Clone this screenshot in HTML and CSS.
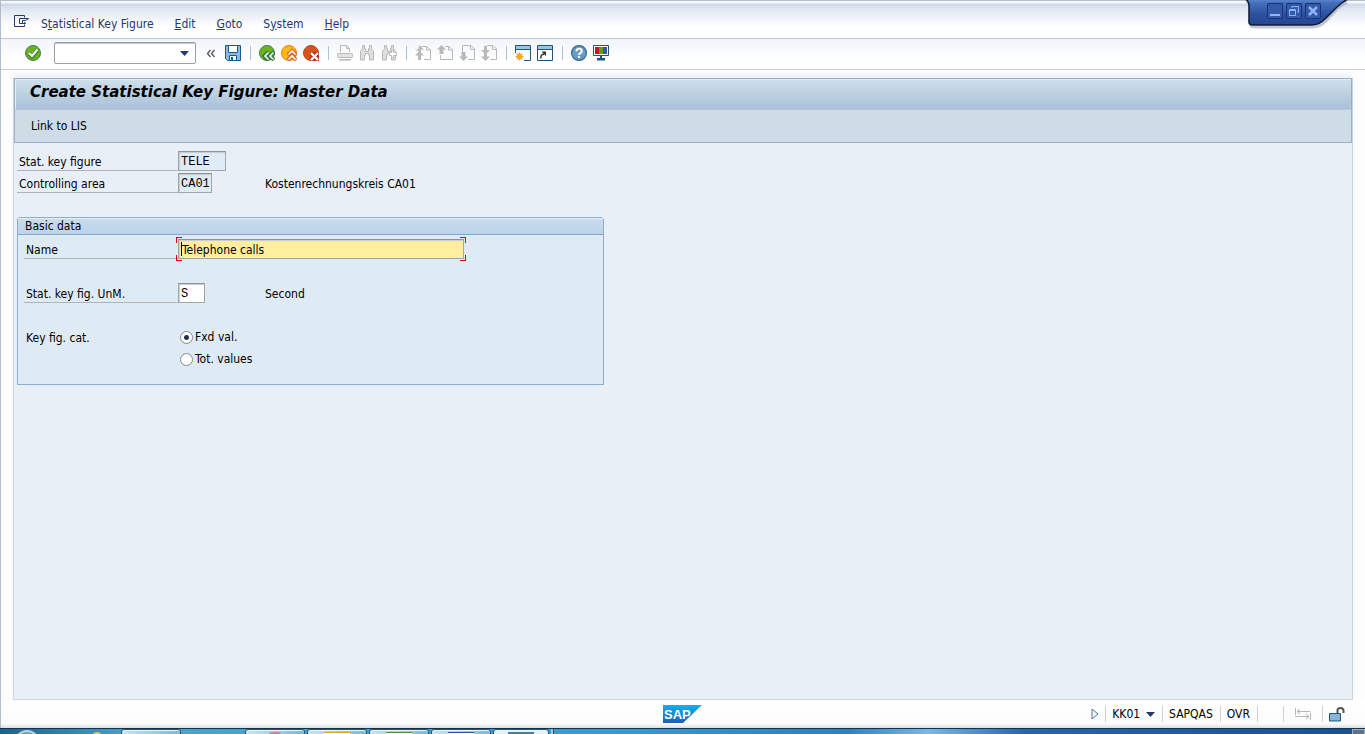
FILE: index.html
```html
<!DOCTYPE html>
<html lang="en">
<head>
<meta charset="utf-8">
<title>Create Statistical Key Figure: Master Data</title>
<link rel="stylesheet" href="styles.css">
</head>
<body>
<div class="window">
  <nav class="menubar">
    <button class="menu-icon" aria-label="System menu">
      <svg width="16" height="14" viewBox="0 0 16 14" fill="none" stroke="#24386b"><path d="M10.500 2.500V.5H.5v11h10v-2M5.500 3.500h9M5.500 3.500v5h3M8.500 5.500h3l3-2M8.500 5.500v3h3l-1-1.500"/></svg>
    </button>
    <a href="#">S<u>t</u>atistical Key Figure</a>
    <a href="#"><u>E</u>dit</a>
    <a href="#"><u>G</u>oto</a>
    <a href="#">S<u>y</u>stem</a>
    <a href="#"><u>H</u>elp</a>
  </nav>

  <div class="window-controls">
    <svg class="window-tab" width="106" height="30" viewBox="0 0 106 30" aria-hidden="true">
      <defs><linearGradient id="tab" x1="0" y1="0" x2="0" y2="1"><stop offset="0" stop-color="#5d8ad2"/><stop offset=".15" stop-color="#456fbb"/><stop offset=".6" stop-color="#2c4f9f"/><stop offset="1" stop-color="#254591"/></linearGradient></defs>
      <path d="M3 1Q6 3 6 8v15q0 4 4 4h59q7 0 13-6L93 9q5-5 10-7" fill="none" stroke="#8c93a3" stroke-width="3" opacity=".5"/>
      <path d="M1-1q4 2 4 7v16q0 3 4 3h59q7 0 13-6L92 8q6-6 12-9z" fill="url(#tab)"/>
      <path d="M1-1q4 2 4 7v16q0 3 4 3h59q7 0 13-6L92 8q6-6 12-9" fill="none" stroke="#0d1838" stroke-width="1.500"/>
    </svg>
    <div class="window-buttons">
      <button aria-label="Minimize"><svg width="16" height="16" viewBox="0 0 16 16"><path d="M3 11h10v2H3z" fill="#8fb4ff"/></svg></button>
      <button aria-label="Restore"><svg width="16" height="16" viewBox="0 0 16 16" fill="none" stroke="#8fb4ff"><path d="M6 5V3.500h6.500V9H11"/><path d="M3.500 6.500h6v6h-6zM3 7.500h7"/></svg></button>
      <button aria-label="Close"><svg width="16" height="16" viewBox="0 0 16 16"><path d="M4 4l8 8M12 4l-8 8" stroke="#8fb4ff" stroke-width="2.500"/></svg></button>
    </div>
  </div>

  <div class="toolbar">
    <button class="tool enter" aria-label="Enter"><svg width="16" height="16" viewBox="0 0 16 16"><circle cx="8" cy="8" r="7.500" fill="#6cb31c" stroke="#3f7f4f"/><path d="M4 8.500l3 3L12.500 5" fill="none" stroke="#3f7f3a" stroke-width="4"/><path d="M4 8l3 3 5.500-6.500" fill="none" stroke="#fff" stroke-width="2"/></svg></button>
    <div class="command">
      <input type="text" aria-label="Command">
      <button aria-label="Command history"><svg width="9" height="5" viewBox="0 0 9 5"><path d="M0 0h9L4.500 5z" fill="#24386b"/></svg></button>
    </div>
    <button class="tool" aria-label="Hide command field"><svg width="16" height="16" viewBox="0 0 16 16" fill="none" stroke="#555"><path d="M7.500 5L4.500 8.500l3 3.500M11.500 5L8.500 8.500l3 3.500" stroke-width="1.300"/></svg></button>
    <button class="tool" aria-label="Save"><svg width="16" height="16" viewBox="0 0 16 16"><path d="M.5.5h15v15H2.500l-2-2z" fill="#8ebbdc" stroke="#155b8e"/><path d="M3.500.5h9v7h-9z" fill="#fff" stroke="#155b8e"/><path d="M4.500 15.500v-5h7v5z" fill="#fff" stroke="#155b8e"/><path d="M6 12h2v4H6z" fill="#155b8e"/></svg></button>
    <span class="sep"></span>
    <button class="tool" aria-label="Back"><svg width="16" height="16" viewBox="0 0 16 16"><circle cx="8" cy="8" r="7.500" fill="#6cb31c" stroke="#3f7f4f"/><path d="M9.500 7L5.500 11l4 4M15 7l-4 4 4 4" fill="none" stroke="#307a3a" stroke-width="4"/><path d="M9.500 7.500L6 11l3.500 3.500M14.500 7.500L11 11l3.500 3.500" fill="none" stroke="#fff" stroke-width="1.600"/></svg></button>
    <button class="tool" aria-label="Exit"><svg width="16" height="16" viewBox="0 0 16 16"><circle cx="8" cy="8" r="7.500" fill="#fcb913" stroke="#e67817"/><path d="M7 10l4-4 4 4M7 15l4-4 4 4" fill="none" stroke="#e0641c" stroke-width="4"/><path d="M7.500 9.500L11 6l3.500 3.500M7.500 14.500L11 11l3.500 3.500" fill="none" stroke="#fff" stroke-width="1.600"/></svg></button>
    <button class="tool" aria-label="Cancel"><svg width="16" height="16" viewBox="0 0 16 16"><circle cx="8" cy="8" r="7.500" fill="#d95316" stroke="#b8441c"/><path d="M7 7h9v9H7z" fill="#b83a1c"/><path d="M8 8l7 7M15 8l-7 7" stroke="#fff" stroke-width="2.200"/></svg></button>
    <span class="sep"></span>
    <button class="tool" disabled aria-label="Print"><svg width="16" height="16" viewBox="0 0 16 16" fill="none" stroke="#b9b9b9"><path d="M3.500 7V.5h6l3 3V7M9.500.5v3h3"/><rect x=".5" y="8.500" width="15" height="4" rx="1" fill="#e2e2e2"/><path d="M2 14.800h12" stroke-width="1.500"/></svg></button>
    <button class="tool" disabled aria-label="Find"><svg width="16" height="16" viewBox="0 0 16 16" fill="#dedede" stroke="#b9b9b9"><path d="M3.500.5h2v3h1v3h3v-3h1v-3h2v3l2 3v8.500h-4V10h-1V8.500h-3V10h-1v5h-4V6.500l2-3z"/></svg></button>
    <button class="tool" disabled aria-label="Find next"><svg width="16" height="16" viewBox="0 0 16 16" fill="#dedede" stroke="#b9b9b9"><path d="M3.500.5h2v3h1v3h3v-3h1v-3h2v3l2 3v8.500h-4V10h-1V8.500h-3V10h-1v5h-4V6.500l2-3z"/><path d="M10.500 5.500h2v2h3v3h-3v2h-2v-2h-2v-3h2z" fill="#fff"/></svg></button>
    <span class="sep"></span>
    <button class="tool" disabled aria-label="First page"><svg width="16" height="16" viewBox="0 0 16 16" fill="none" stroke="#b9b9b9"><path d="M7 1.500h5l3.500 3.500v9.500H9M11.500 1.500V5h4"/><path d="M4.500 0L9 4.500H6V7h3L4.500 7 0 4.500h3zM4.500 6L9 10.500H6V15H3v-4.500H0z" fill="#b9b9b9" stroke="none"/></svg></button>
    <button class="tool" disabled aria-label="Previous page"><svg width="16" height="16" viewBox="0 0 16 16" fill="none" stroke="#b9b9b9"><path d="M8 1.500h4l3.500 3.500v9.500h-12V10M11.500 1.500V5h4"/><path d="M4.500 0L9 4.500H6.500V9h-4V4.500H0z" fill="#b9b9b9" stroke="none"/></svg></button>
    <button class="tool" disabled aria-label="Next page"><svg width="16" height="16" viewBox="0 0 16 16" fill="none" stroke="#b9b9b9"><path d="M3.500 7V.5h8.500L15.500 4v10.500H9M11.500.5v4h4"/><path d="M4.500 16L9 11.500H6.500V7h-4v4.500H0z" fill="#b9b9b9" stroke="none"/></svg></button>
    <button class="tool" disabled aria-label="Last page"><svg width="16" height="16" viewBox="0 0 16 16" fill="none" stroke="#b9b9b9"><path d="M6 .5h6L15.500 4v10.500H9M11.500.5v4h4"/><path d="M4.500 9.500L9 5H6V1H3v4H0zM4.500 16L9 11.500H6V8H3v3.500H0z" fill="#b9b9b9" stroke="none"/></svg></button>
    <span class="sep"></span>
    <button class="tool" aria-label="New session"><svg width="16" height="16" viewBox="0 0 16 16"><path d="M.5.5h15v15H9M.5 8V.5" fill="none" stroke="#1b5580"/><path d="M1 1h14v3H1z" fill="#9cc3df"/><path d="M0 4.500h16" stroke="#1b5580"/><path d="M4.500 7.500v8M.5 11.500h8M1.700 8.700l5.600 5.600M7.300 8.700l-5.600 5.600" stroke="#ef9b14" stroke-width="1.200"/><circle cx="4.500" cy="11.500" r="2.600" fill="#f6a91b"/></svg></button>
    <button class="tool" aria-label="Create shortcut"><svg width="16" height="16" viewBox="0 0 16 16"><path d="M.5.5h15v15H.5z" fill="#fff" stroke="#1b5580"/><path d="M1 1h14v3H1z" fill="#9cc3df"/><path d="M0 4.500h16" stroke="#1b5580"/><path d="M4 13.500q-1-4 3.500-4.500" fill="none" stroke="#333" stroke-width="1.500"/><path d="M4.500 6.500H9V11z" fill="#333"/></svg></button>
    <span class="sep"></span>
    <button class="tool" aria-label="Help"><svg width="16" height="16" viewBox="0 0 16 16"><circle cx="8" cy="8" r="7.400" fill="#6a9cc4" stroke="#2f6793" stroke-width="1.200"/><path d="M5.500 6.300q0-2.700 2.600-2.700 2.700 0 2.700 2.400 0 1.500-1.500 2.200Q8 8.800 8 10" fill="none" stroke="#fff" stroke-width="1.900"/><path d="M7 11h2v2H7z" fill="#fff"/></svg></button>
    <button class="tool" aria-label="Customize layout"><svg width="16" height="16" viewBox="0 0 16 16"><path d="M.5.5h15v10H.5z" fill="#fff" stroke="#1b5580"/><path d="M2 2h4v7H2z" fill="#c8141c"/><path d="M6 2h4v7H6z" fill="#55a51c"/><path d="M10 2h4v7h-4z" fill="#3155b0"/><path d="M7 11h2v2h3v2.500H4V13h3z" fill="#1b5580"/></svg></button>
  </div>

  <main class="screen">
    <header class="titlebar"><h1>Create Statistical Key Figure: Master Data</h1></header>
    <div class="app-toolbar"><button>Link to LIS</button></div>

    <form class="form">
      <div class="row">
        <label for="figure">Stat. key figure</label>
        <input class="field readonly w-figure" id="figure" value="TELE" readonly>
      </div>
      <div class="row">
        <label for="area">Controlling area</label>
        <div class="slot"><input class="field readonly w-area" id="area" value="CA01" readonly></div>
        <span class="text">Kostenrechnungskreis CA01</span>
      </div>

      <section class="group">
        <h2>Basic data</h2>
        <div class="group-body">
          <div class="row">
            <label for="name">Name</label>
            <div class="focus">
              <input class="field name" id="name" value="Telephone calls">
              <i class="caret"></i><i class="corner tl"></i><i class="corner tr"></i><i class="corner bl"></i><i class="corner br"></i>
            </div>
          </div>
          <div class="row spaced">
            <label for="unit">Stat. key fig. UnM.</label>
            <div class="slot"><input class="field w-unit" id="unit" value="S"></div>
            <span class="text">Second</span>
          </div>
          <div class="row spaced">
            <span class="caption">Key fig. cat.</span>
            <label class="radio"><input type="radio" name="category" checked>Fxd val.</label>
          </div>
          <div class="row">
            <span class="caption"></span>
            <label class="radio"><input type="radio" name="category">Tot. values</label>
          </div>
        </div>
      </section>
    </form>
  </main>

  <footer class="statusbar">
    <svg class="logo" width="40" height="18" viewBox="0 0 40 18" role="img" aria-label="SAP">
      <defs><linearGradient id="sap" x1="0" y1="0" x2="0" y2="1"><stop offset="0" stop-color="#0fb3ea"/><stop offset="1" stop-color="#1b5fb6"/></linearGradient></defs>
      <path d="M0 0h39L20 18H0z" fill="url(#sap)"/>
      <text class="logo-text" x="1" y="14">SAP</text>
    </svg>
    <div class="status">
      <button class="expand" aria-label="Expand status"><svg width="8" height="12" viewBox="0 0 8 12"><path d="M1 1v10l6-5z" fill="#edf4fa" stroke="#5d7695"/></svg></button>
      <button class="cell tcode">KK01<svg width="9" height="5" viewBox="0 0 9 5"><path d="M0 0h9L4.500 5z" fill="#24386b"/></svg></button>
      <span class="cell">SAPQAS</span>
      <span class="cell">OVR</span>
      <span class="cell blank"></span>
      <span class="cell transfer"><svg width="16" height="12" viewBox="0 0 16 12" fill="none" stroke="#b5b5b5"><path d="M.5 0v7M2 3.500h13M5 1L2 3.500 5 6M15.500 5v7M0 8.500h14M11 6l3 2.500-3 2.500"/></svg></span>
      <span class="cell"><svg width="16" height="15" viewBox="0 0 16 15"><path d="M8.500 7V3.500q0-2.500 3-2.500t3 2.500V6" fill="none" stroke="#555" stroke-width="2"/><path d="M.5 6.500h11v7.500H.5z" fill="#8ab4d6" stroke="#1b5580"/></svg></span>
    </div>
  </footer>
</div>

<div class="taskbar">
  <i class="start"></i><i class="pin"></i>
  <i class="task light"></i>
  <i class="task first red"></i><i class="task orange"></i><i class="task green"></i><i class="task blue"></i><i class="task active"></i><i class="stack"></i>
  <i class="desktop"></i>
</div>
</body>
</html>
```
FILE: styles.css
```css
* { box-sizing: border-box; }

body {
  margin: 0;
  min-height: 100vh;
  display: flex;
  flex-direction: column;
  overflow: hidden;
  font: 12px/16px "DejaVu Sans Condensed", "DejaVu Sans", sans-serif;
  color: #000;
}

button, input {
  font: inherit;
  color: inherit;
  margin: 0;
}

button {
  padding: 0;
  border: 0;
  background: none;
}

svg { display: block; }

.window {
  flex: 1;
  display: flex;
  flex-direction: column;
  position: relative;
  border-left: 1px solid #b3bdcc;
  background: #fdfdfe;
}

.menubar {
  height: 39px;
  display: flex;
  align-items: center;
  gap: 21px;
  padding: 8px 13px 0;
  border-top: 1px solid #b5c0d2;
  border-bottom: 1px solid #c3c9d8;
  background: linear-gradient(#f5f8fc 0, #f5f8fc 2px, #cdd8e8 3px, #e2e9f2 9px, #fff 26px);
}

.menubar a {
  color: #24386b;
  text-decoration: none;
}

.menu-icon { margin-right: -10px; padding-bottom: 4px; }

.window-controls {
  position: absolute;
  top: 0;
  right: 15px;
}

.window-buttons {
  position: absolute;
  top: 3px;
  left: 23px;
  display: flex;
  gap: 3px;
}

.window-buttons button {
  width: 16px;
  height: 16px;
  border-radius: 2px;
  background: #335aa8;
  box-shadow: inset 0 0 0 1px #1a3273;
}

.toolbar {
  height: 31px;
  display: flex;
  align-items: center;
  padding: 0 21px 2px;
  border-bottom: 1px solid #c9ccd9;
  background: linear-gradient(#f2f5fa, #fff 70%);
}

.tool {
  width: 22px;
  height: 22px;
  display: flex;
  align-items: center;
  justify-content: center;
}

.command {
  width: 142px;
  height: 22px;
  display: flex;
  align-items: center;
  margin: 0 4px 0 10px;
  padding-right: 6px;
  border: 1px solid #999fa3;
  border-radius: 2px;
  background: #fff;
  box-shadow: inset 0 1px #c6cacc;
}

.command input {
  flex: 1;
  min-width: 0;
  border: 0;
  outline: 0;
  background: none;
}

.sep {
  width: 12px;
  height: 14px;
  background: linear-gradient(#a9c4de, #a9c4de) center / 1px 100% no-repeat;
}

.screen {
  flex: 1;
  margin: 8px 12px 0;
  border: 1px solid #cdd5de;
  border-top: 0;
  background: #e8eff6;
  box-shadow: 0 -4px 4px #eff3f8;
}

.titlebar {
  height: 31px;
  padding: 3px 15px;
  border: 1px solid #9dacc5;
  border-bottom: 0;
  background: linear-gradient(#cfe0ec, #bcd0e0 50%, #abc1da);
  box-shadow: inset 1px 1px #e3edf5;
}

h1 {
  margin: 0;
  font: italic bold 15px/20px "DejaVu Sans", sans-serif;
}

.app-toolbar {
  height: 34px;
  display: flex;
  align-items: center;
  padding: 0 16px;
  border: 1px solid #9dafc9;
  border-top-color: #b8c7d8;
  background: #cedce7;
}

.form { padding: 8px 3px; }

.row {
  height: 20px;
  display: flex;
  align-items: center;
  margin-bottom: 2px;
}

.row > label:first-child, .caption {
  width: 161px;
  height: 20px;
  padding: 3px 2px 0;
  border-bottom: 1px solid #b1b3b5;
}

.row .caption { border: 0; }

.text { padding-top: 2px; }

.field {
  height: 20px;
  padding: 1px 2px 0;
  border: 1px solid #a0a5a9;
  border-top-color: #8f9497;
  outline: 0;
  background: #fff;
  box-shadow: inset 1px 1px 1px #c4cbd0;
  font-family: "Liberation Mono", monospace;
}

.readonly { background: #dfebf5; }
.w-figure { width: 48px; }
.w-area { width: 34px; }
.w-unit { width: 27px; }
.slot { width: 87px; }

.slot .field { display: block; }

.group {
  width: 587px;
  max-width: 100%;
  margin-top: 24px;
  border: 1px solid #8eafcb;
  border-radius: 3px 3px 0 0;
  background: #dfebf4;
}

h2 {
  margin: 0;
  padding: 0 7px;
  border-bottom: 1px solid #84a5c8;
  background: linear-gradient(#cbdcec, #bcd3e9);
  box-shadow: inset 0 1px #e5eef6;
  font-size: 12px;
  font-weight: normal;
  line-height: 16px;
}

.group-body { padding: 4px 6px 13px; }

.group .row > label:first-child, .group .caption { width: 154px; }

.spaced { margin-top: 24px; }

.focus {
  position: relative;
  width: 286px;
}

.name {
  display: block;
  width: 100%;
  padding-left: 3px;
  background: #ffee9f;
  font-family: inherit;
}

.caret {
  position: absolute;
  top: 3px;
  left: 3px;
  width: 1px;
  height: 14px;
  background: #000;
}

.corner {
  position: absolute;
  width: 6px;
  height: 6px;
  border: 0 solid #d9000d;
}

.tl { top: -2px; left: -2px; border-width: 1px 0 0 1px; }
.tr { top: -2px; right: -2px; border-width: 1px 1px 0 0; }
.bl { bottom: -2px; left: -2px; border-width: 0 0 1px 1px; }
.br { bottom: -2px; right: -2px; border-width: 0 1px 1px 0; }

.radio {
  display: flex;
  align-items: center;
  gap: 2px;
  padding-left: 2px;
}

.radio input {
  appearance: none;
  width: 13px;
  height: 13px;
  border: 1px solid #85898d;
  border-radius: 50%;
  background: #fff;
}

.radio input:checked { background: radial-gradient(circle, #25304a 2px, #fff 3px); }

.statusbar {
  height: 28px;
  display: grid;
  grid-template-columns: 1fr auto 1fr;
  align-items: center;
  padding-right: 20px;
  padding-left: 19px;
  background: linear-gradient(#fff, #fbfbfb 85%, #dcdcdc);
}

.logo { grid-column: 2; }

.logo-text {
  font: bold 13px "Liberation Sans", sans-serif;
  fill: #fff;
}

.status {
  display: flex;
  align-items: center;
  justify-content: flex-end;
}

.expand { margin-right: 6px; }

.cell {
  height: 16px;
  display: flex;
  align-items: center;
  padding: 0 7px 0 6px;
  border-left: 1px solid #cfcfcf;
}

.cell:last-child { padding-right: 0; }
.tcode { gap: 6px; }
.blank { width: 26px; }
.transfer { padding: 0 11px; }

.taskbar {
  height: 6px;
  display: flex;
  align-items: flex-start;
  overflow: hidden;
  border-top: 1px solid #12334f;
  background: linear-gradient(90deg, #19628f, #4aa5cc 10%, #369bd0 45%, #2d80bd 62%, #79b8e8 68%, #2566ad 75%, #194f91);
}

.start {
  width: 26px;
  height: 26px;
  margin: 1px 52px 0 14px;
  border: 2px solid #b7d2df;
  border-radius: 50%;
  background: #719eb8;
}

.pin {
  width: 10px;
  height: 10px;
  margin: 3px 19px 0 0;
  border-radius: 50%;
  background: #e5cf25;
}

.task {
  width: 60px;
  height: 8px;
  display: flex;
  justify-content: center;
  margin-right: 2px;
  border: 1px solid #235370;
  border-radius: 3px 3px 0 0;
  background: linear-gradient(90deg, #c9e5ef, #79bad7);
  box-shadow: inset 0 1px #eaf7fc;
}

.task::before {
  content: "";
  width: 26px;
  height: 4px;
  margin-top: 2px;
  background: #fff;
}

.first { margin-left: 62px; }
.light::before { display: none; }
.red::before { width: 12px; background: #c98383; border-radius: 50% 50% 0 0; }
.orange::before { border-top: 1px solid #e5a416; }
.green::before { border-top: 1px solid #439844; }
.blue::before { border-top: 1px solid #2259a8; }
.active { width: 56px; background: #e3f2fa; }
.active::before { background: #4c79a8; }

.stack {
  width: 3px;
  height: 8px;
  border-right: 1px solid #235370;
  background: #9ccce1;
}

.desktop {
  width: 13px;
  height: 8px;
  margin-left: auto;
  border: 1px solid #9fb0c2;
  background: #5f7388;
}
```
